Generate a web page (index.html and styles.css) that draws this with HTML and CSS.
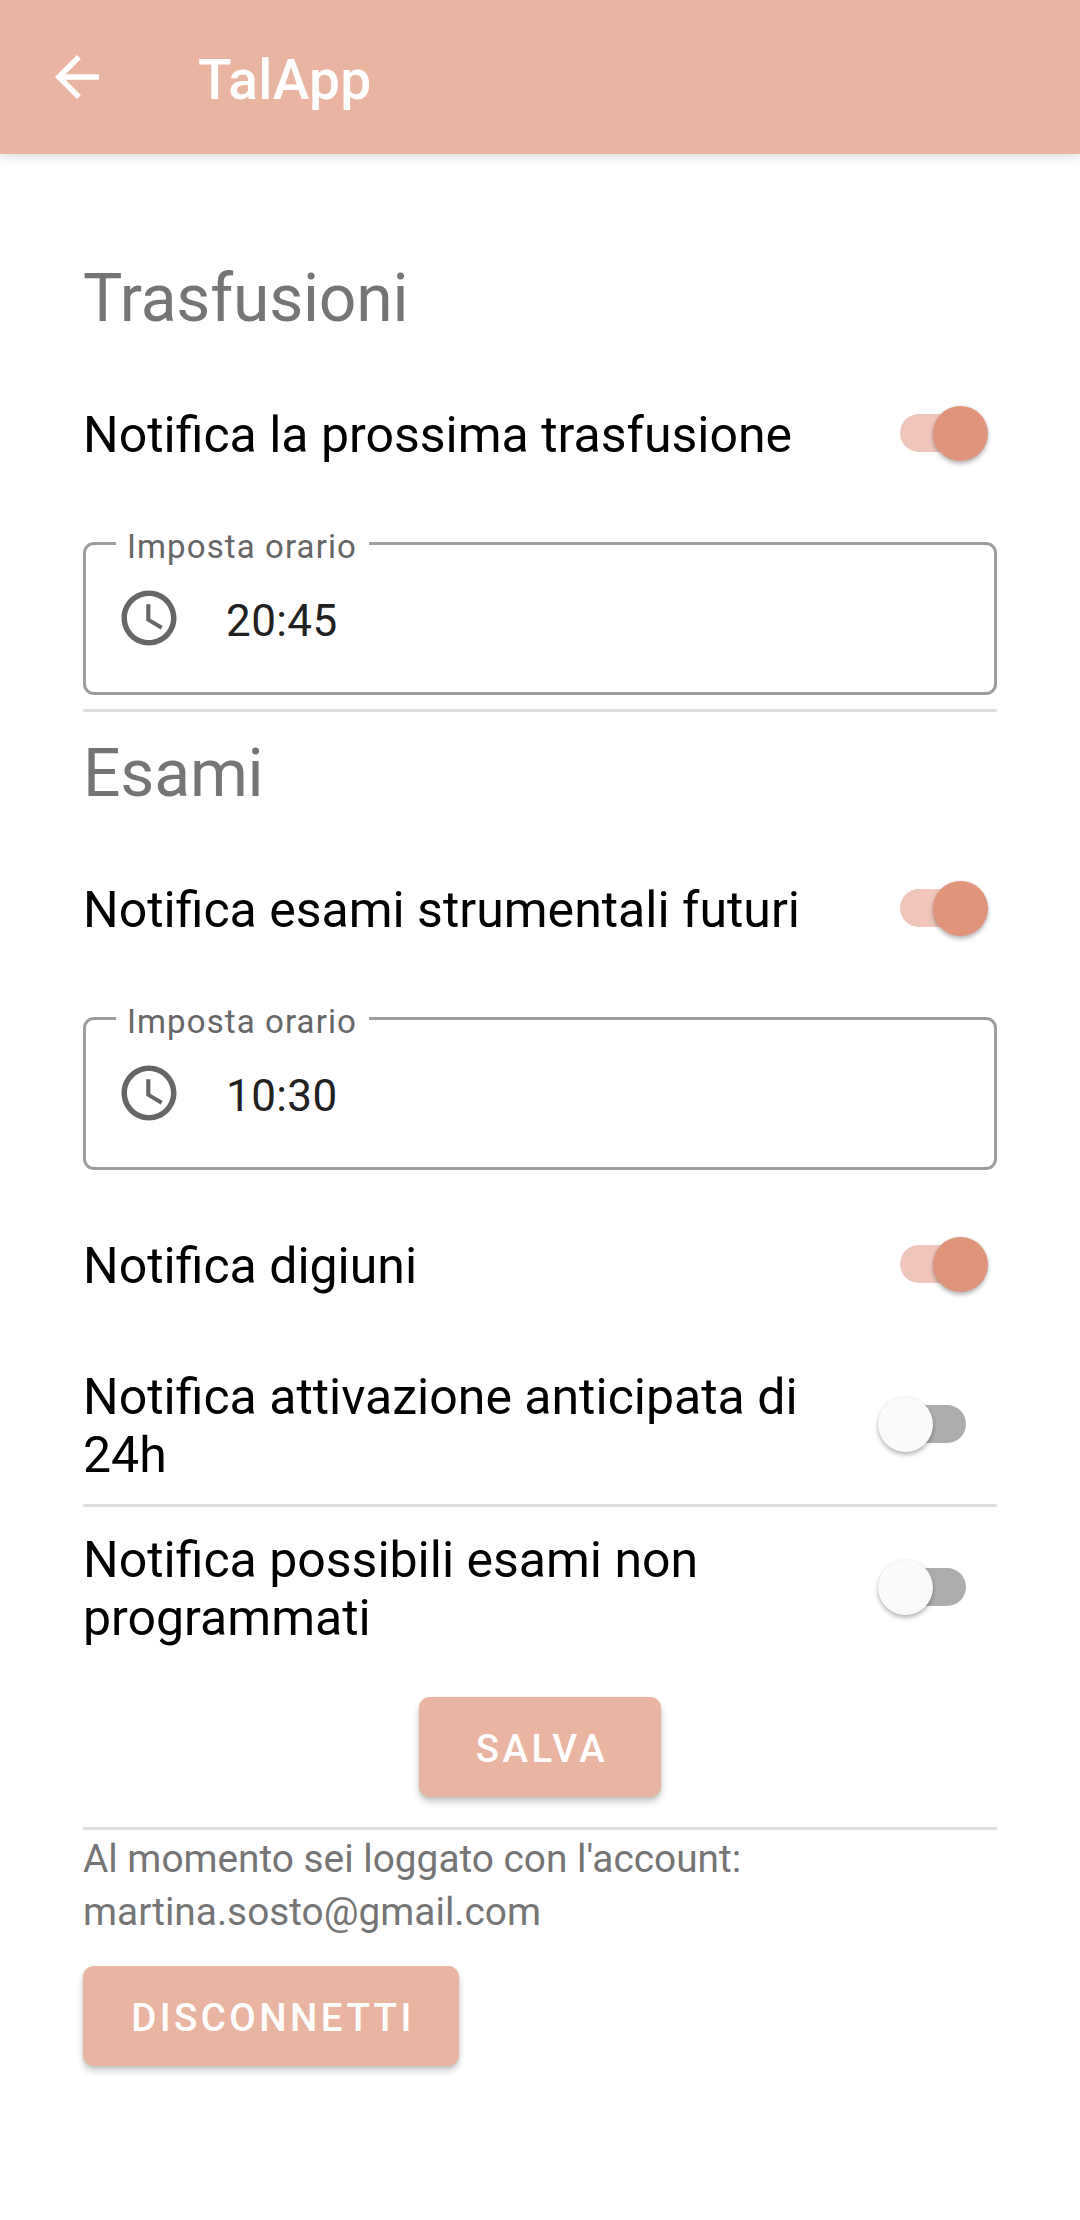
FILE: index.html
```html
<!DOCTYPE html>
<html lang="it">
<head>
<meta charset="utf-8">
<title>TalApp</title>
<link rel="stylesheet" href="styles.css">
</head>
<body>
<header class="appbar">
  <svg class="back" viewBox="0 0 24 24"><path d="M20 11H7.83l5.59-5.59L12 4l-8 8 8 8 1.41-1.41L7.83 13H20v-2z"/></svg>
  <h1 class="title">TalApp</h1>
</header>
<main class="content">
  <section>
    <h2 class="heading">Trasfusioni</h2>
    <div class="row">
      <span class="label">Notifica la prossima trasfusione</span>
      <span class="switch on"></span>
    </div>
    <div class="field">
      <span class="hint">Imposta orario</span>
      <svg class="clock" viewBox="0 0 24 24"><path d="M11.99 2C6.47 2 2 6.48 2 12s4.47 10 9.99 10C17.52 22 22 17.52 22 12S17.52 2 11.99 2zM12 20c-4.42 0-8-3.58-8-8s3.58-8 8-8 8 3.58 8 8-3.58 8-8 8z"/><path d="M12.5 7H11v6l5.25 3.15.75-1.23-4.5-2.67z"/></svg>
      <span class="time">20:45</span>
    </div>
  </section>
  <hr class="divider">
  <section class="exams">
    <h2 class="heading">Esami</h2>
    <div class="row">
      <span class="label">Notifica esami strumentali futuri</span>
      <span class="switch on"></span>
    </div>
    <div class="field">
      <span class="hint">Imposta orario</span>
      <svg class="clock" viewBox="0 0 24 24"><path d="M11.99 2C6.47 2 2 6.48 2 12s4.47 10 9.99 10C17.52 22 22 17.52 22 12S17.52 2 11.99 2zM12 20c-4.42 0-8-3.58-8-8s3.58-8 8-8 8 3.58 8 8-3.58 8-8 8z"/><path d="M12.5 7H11v6l5.25 3.15.75-1.23-4.5-2.67z"/></svg>
      <span class="time">10:30</span>
    </div>
    <div class="row fasting">
      <span class="label">Notifica digiuni</span>
      <span class="switch on"></span>
    </div>
    <div class="row early">
      <span class="label">Notifica attivazione anticipata di 24h</span>
      <span class="switch"></span>
    </div>
  </section>
  <hr class="divider">
  <div class="row unplanned">
    <span class="label">Notifica possibili esami non programmati</span>
    <span class="switch"></span>
  </div>
  <button class="button save">SALVA</button>
  <hr class="divider account-divider">
  <p class="account">Al momento sei loggato con l'account:</p>
  <p class="account email">martina.sosto@gmail.com</p>
  <button class="button logout">DISCONNETTI</button>
</main>
</body>
</html>
```
FILE: styles.css
```css
* {
  box-sizing: border-box;
}

body {
  margin: 0;
  min-height: 2220px;
  background: #fff;
  font-family: Roboto, "Liberation Sans", sans-serif;
}

.appbar {
  display: flex;
  align-items: center;
  height: 154px;
  padding-left: 44px;
  background: #eab5a0;
  box-shadow: 0 2px 12px rgba(0, 0, 0, 0.16);
}

.back {
  width: 66px;
  height: 66px;
  fill: #fff;
}

.title {
  margin: 6px 0 0 88px;
  font-size: 55px;
  font-weight: 500;
  line-height: 64px;
  letter-spacing: 0.35px;
  color: #fff;
}

.content {
  display: flex;
  flex-direction: column;
  padding: 106px 83px 0;
}

.heading {
  margin: 0;
  font-size: 66px;
  font-weight: 400;
  line-height: 77px;
  letter-spacing: -0.2px;
  color: #757575;
}

.row {
  display: flex;
  align-items: center;
  justify-content: space-between;
  height: 196px;
}

.fasting {
  height: 192px;
}

.early {
  height: 128px;
}

.unplanned {
  height: 164px;
}

.label {
  width: 760px;
  font-size: 50px;
  line-height: 58px;
  color: #000;
}

.switch {
  position: relative;
  display: flex;
  align-items: center;
  width: 88px;
  height: 55px;
  margin: 0 31px 4px 0;
}

.switch::before {
  content: "";
  width: 76px;
  height: 38px;
  margin-left: 12px;
  border-radius: 19px;
  background: #adadad;
}

.switch::after {
  content: "";
  position: absolute;
  left: 0;
  top: 0;
  width: 55px;
  height: 55px;
  border-radius: 50%;
  background: #fafafa;
  box-shadow: 0 3px 4px rgba(0, 0, 0, 0.26), 0 0 3px rgba(0, 0, 0, 0.08);
}

.switch.on {
  margin-right: 9px;
}

.switch.on::before {
  margin-left: 0;
  background: #f0c6ba;
}

.switch.on::after {
  left: 33px;
  background: #e0947c;
}

.field {
  position: relative;
  display: flex;
  height: 153px;
  margin-top: 9px;
  padding: 40px 30px 0;
  border: 3px solid #9e9e9e;
  border-radius: 11px;
}

.hint {
  position: absolute;
  left: 30px;
  top: -18px;
  width: 253px;
  padding-left: 11px;
  background: #fff;
  font-size: 33px;
  line-height: 39px;
  letter-spacing: 1.1px;
  white-space: nowrap;
  color: #666;
}

.clock {
  width: 66px;
  height: 66px;
  fill: #666;
}

.time {
  margin: 10px 0 0 44px;
  font-size: 44px;
  line-height: 52px;
  letter-spacing: 0.41px;
  color: #212121;
}

.divider {
  width: 100%;
  height: 3px;
  margin: 14px 0 0;
  border: 0;
  background: #e0e0e0;
}

.exams {
  margin-top: 23px;
}

.button {
  height: 100px;
  padding: 2px 0 0 4px;
  border: 0;
  border-radius: 11px;
  background: #eab5a0;
  box-shadow: 0 5px 7px rgba(0, 0, 0, 0.2), 0 1px 3px rgba(0, 0, 0, 0.1);
  font-family: inherit;
  font-size: 38.5px;
  font-weight: 500;
  line-height: 45px;
  letter-spacing: 3.44px;
  color: #fff;
}

.save {
  align-self: center;
  width: 242px;
  margin-top: 26px;
}

.account-divider {
  margin-top: 30px;
}

.account {
  margin: 6px 0 0;
  font-size: 38.8px;
  line-height: 45px;
  color: #757575;
}

.email {
  margin-top: 8px;
}

.logout {
  width: 376px;
  margin-top: 32px;
}
```
